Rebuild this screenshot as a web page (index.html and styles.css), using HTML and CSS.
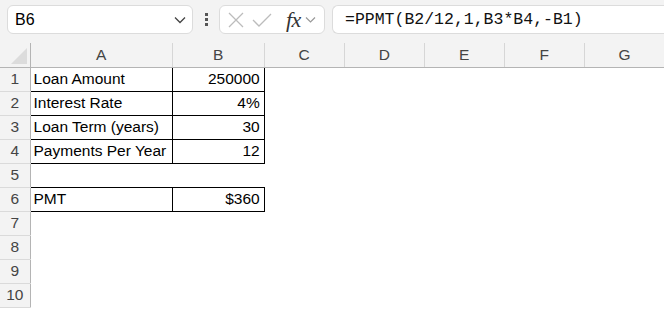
FILE: index.html
```html
<!DOCTYPE html>
<html lang="en">
<head>
    <meta charset="UTF-8">
    <title>PPMT</title>
    <link rel="stylesheet" href="styles.css">
</head>
<body>
    <div class="formula-bar">
        <div class="name-box">
            <span>B6</span>
            <svg class="chev" width="12" height="8" viewBox="0 0 12 8"><path d="M1 1.5 L6 6.5 L11 1.5" fill="none" stroke="#444" stroke-width="1.3"/></svg>
        </div>
        <div class="dots"><i></i><i></i><i></i></div>
        <div class="fx-box">
            <svg width="18" height="18" viewBox="0 0 18 18"><path d="M2 2 L16 16 M16 2 L2 16" stroke="#bcbcbc" stroke-width="1.3"/></svg>
            <svg width="20" height="16" viewBox="0 0 20 16"><path d="M1 8 L7 14 L19 2" fill="none" stroke="#bcbcbc" stroke-width="1.3"/></svg>
            <span class="fx">fx</span>
            <svg width="11" height="7" viewBox="0 0 11 7"><path d="M1 1.5 L5.5 6 L10 1.5" fill="none" stroke="#999" stroke-width="1.2"/></svg>
        </div>
        <div class="formula">=PPMT(B2/12,1,B3*B4,-B1)</div>
    </div>

    <table class="sheet">
        <colgroup>
            <col class="c-rh">
            <col class="c-a">
            <col class="c-b">
            <col class="c-std">
            <col class="c-std">
            <col class="c-std">
            <col class="c-std">
            <col class="c-std">
        </colgroup>
        <thead>
            <tr>
                <th class="corner"><span class="tri"></span></th>
                <th>A</th><th>B</th><th>C</th><th>D</th><th>E</th><th>F</th><th>G</th>
            </tr>
        </thead>
        <tbody>
            <tr><th>1</th><td class="box">Loan Amount</td><td class="box num">250000</td><td></td><td></td><td></td><td></td><td></td></tr>
            <tr><th>2</th><td class="box">Interest Rate</td><td class="box num">4%</td><td></td><td></td><td></td><td></td><td></td></tr>
            <tr><th>3</th><td class="box">Loan Term (years)</td><td class="box num">30</td><td></td><td></td><td></td><td></td><td></td></tr>
            <tr><th>4</th><td class="box">Payments Per Year</td><td class="box num">12</td><td></td><td></td><td></td><td></td><td></td></tr>
            <tr><th>5</th><td></td><td></td><td></td><td></td><td></td><td></td><td></td></tr>
            <tr><th>6</th><td class="box">PMT</td><td class="box num">$360</td><td></td><td></td><td></td><td></td><td></td></tr>
            <tr><th>7</th><td></td><td></td><td></td><td></td><td></td><td></td><td></td></tr>
            <tr><th>8</th><td></td><td></td><td></td><td></td><td></td><td></td><td></td></tr>
            <tr><th>9</th><td></td><td></td><td></td><td></td><td></td><td></td><td></td></tr>
            <tr><th>10</th><td></td><td></td><td></td><td></td><td></td><td></td><td></td></tr>
        </tbody>
    </table>
</body>
</html>
```

FILE: styles.css
```css
body {
    margin: 0;
    background: #ffffff;
    font-family: 'Liberation Sans', Arial, sans-serif;
    color: #000;
    overflow: hidden;
}

.formula-bar {
    display: flex;
    align-items: center;
    height: 43px;
    padding: 5px 0 9px 7px;
    box-sizing: border-box;
    background: #f3f3f3;
}

.name-box, .fx-box, .formula {
    height: 29px;
    box-sizing: border-box;
    background: #fff;
    border: 1px solid #dcdcdc;
    border-radius: 6px;
    display: flex;
    align-items: center;
}

.name-box {
    width: 186px;
    padding: 0 6px 0 7px;
    justify-content: space-between;
    font-size: 16px;
}

.dots {
    width: 26px;
    display: flex;
    flex-direction: column;
    align-items: center;
    gap: 2px;
}

.dots i {
    display: block;
    width: 3px;
    height: 3px;
    background: #555;
}

.fx-box {
    width: 106px;
    padding: 0 3px 0 7px;
    gap: 7px;
}

.fx {
    font-family: 'Liberation Serif', serif;
    font-style: italic;
    font-size: 22px;
    color: #333;
    margin-left: 7px;
    margin-right: -3px;
    letter-spacing: -0.5px;
    line-height: 1;
}

.formula {
    flex: 1;
    margin-left: 7px;
    border-right: none;
    border-radius: 6px 0 0 6px;
    padding-left: 12px;
    font-family: 'Liberation Mono', monospace;
    font-size: 16.5px;
    color: #111;
}

.sheet {
    table-layout: fixed;
    border-collapse: collapse;
    width: 665px;
}

.c-rh { width: 30px; }
.c-a { width: 142px; }
.c-b { width: 92px; }
.c-std { width: 80px; }

.sheet th, .sheet td {
    height: 24px;
    padding: 0;
    box-sizing: border-box;
    font-size: 15.5px;
    white-space: nowrap;
    overflow: hidden;
}

.sheet thead th {
    background: #f3f3f3;
    color: #444;
    font-weight: normal;
    text-align: center;
    border-right: 1px solid #d6d6d6;
    border-bottom: 1px solid #b4b4b4;
}

.sheet tbody th {
    background: #f3f3f3;
    color: #444;
    font-weight: normal;
    text-align: center;
    border-right: 1px solid #b4b4b4;
    border-bottom: 1px solid #dadada;
}

.sheet thead th.corner {
    position: relative;
    border-right: 1px solid #b4b4b4;
}

.tri {
    position: absolute;
    right: 3px;
    bottom: 3px;
    width: 0;
    height: 0;
    border-left: 16px solid transparent;
    border-bottom: 16px solid #dcdcdc;
}

.sheet td {
    padding: 0 3px;
}

.sheet td.box {
    border: 1px solid #000;
}

.sheet td.num {
    text-align: right;
    padding-right: 4px;
}
```
